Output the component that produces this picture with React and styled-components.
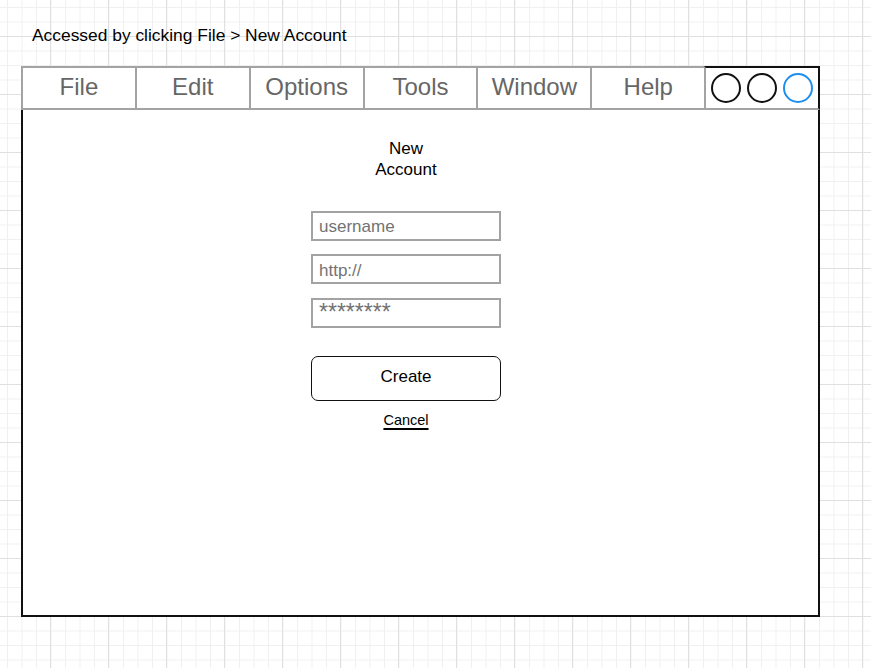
import React from "react";
import styled, { createGlobalStyle } from "styled-components";

const menuItems = ["File", "Edit", "Options", "Tools", "Window", "Help"];

function App() {
	return (
		<>
			<GlobalStyle />
			<Page>
				<Caption>Accessed by clicking File &gt; New Account</Caption>
				<Window>
					<MenuBar>
						{menuItems.map((item) => (
							<MenuItem key={item}>{item}</MenuItem>
						))}
						<Controls>
							<Dot />
							<Dot />
							<Dot $accent />
						</Controls>
					</MenuBar>
					<Body>
						<Form>
							<Title>
								New
								<br />
								Account
							</Title>
							<Fields>
								<Field placeholder="username" />
								<Field placeholder="http://" />
								<Field placeholder="********" $big />
							</Fields>
							<CreateButton type="button">Create</CreateButton>
							<CancelLink href="#">Cancel</CancelLink>
						</Form>
					</Body>
				</Window>
			</Page>
		</>
	);
}

export default App;

const GlobalStyle = createGlobalStyle`
	html, body {
		margin: 0;
		padding: 0;
	}
	body {
		font-family: "Liberation Sans", Arial, Helvetica, sans-serif;
		background-color: #ffffff;
		background-image:
			linear-gradient(to right, #e0e0e0 1px, transparent 1px),
			linear-gradient(to bottom, #e0e0e0 1px, transparent 1px),
			linear-gradient(to right, #f0f0f0 1px, transparent 1px),
			linear-gradient(to bottom, #f0f0f0 1px, transparent 1px);
		background-size: 58px 58px, 58px 58px, 14.5px 14.5px, 14.5px 14.5px;
		background-position: 50px 36px, 50px 36px, 7px 7px, 7px 7px;
		min-height: 668px;
	}
`;

const Page = styled.div`
	padding: 26px 0 0 21px;
`;

const Caption = styled.div`
	margin-left: 11px;
	font-size: 17.4px;
	line-height: 18px;
	color: #000;
	margin-bottom: 22px;
`;

const Window = styled.div`
	width: 799px;
	display: flex;
	flex-direction: column;
`;

const MenuBar = styled.div`
	display: flex;
	height: 44px;
`;

const MenuItem = styled.div`
	flex: 1;
	box-sizing: border-box;
	display: flex;
	align-items: center;
	justify-content: center;
	padding-bottom: 2px;
	border: 2px solid #a3a3a3;
	background: #fff;
	font-size: 24px;
	color: #666;
	& + & {
		margin-left: -2px;
	}
`;

const Controls = styled.div`
	flex: 1;
	box-sizing: border-box;
	margin-left: -2px;
	display: flex;
	align-items: center;
	justify-content: center;
	gap: 6px;
	background: #fff;
	border: 2px solid #a3a3a3;
	border-top-color: #111;
	border-right-color: #111;
`;

const Dot = styled.span`
	width: 30px;
	height: 30px;
	box-sizing: border-box;
	border-radius: 50%;
	border: 2px solid ${(p) => (p.$accent ? "#1e8fef" : "#111")};
`;

const Body = styled.div`
	height: 507px;
	box-sizing: border-box;
	border: 2px solid #111;
	border-top: none;
	background: #fff;
	padding-top: 27.5px;
`;

const Form = styled.div`
	width: 190px;
	margin-left: 288px;
	display: flex;
	flex-direction: column;
	align-items: center;
`;

const Title = styled.div`
	font-size: 17px;
	line-height: 21px;
	text-align: center;
	color: #000;
`;

const Fields = styled.div`
	align-self: stretch;
	display: flex;
	flex-direction: column;
	gap: 13.5px;
	margin-top: 31px;
`;

const Field = styled.input`
	box-sizing: border-box;
	width: 100%;
	height: 30px;
	margin: 0;
	padding: ${(p) => (p.$big ? "0 6px" : "3px 6px 0")};
	border: 2px solid #a3a3a3;
	border-radius: 0;
	outline: none;
	background: #fff;
	font-family: inherit;
	font-size: ${(p) => (p.$big ? "23px" : "17px")};
	color: #666;
	&::placeholder {
		color: #737373;
		opacity: 1;
	}
`;

const CreateButton = styled.button`
	align-self: stretch;
	box-sizing: border-box;
	height: 45px;
	margin-top: 28px;
	padding: 0 0 2px;
	border: 1.5px solid #111;
	border-radius: 7px;
	background: #fff;
	font-family: inherit;
	font-size: 17px;
	color: #000;
	cursor: pointer;
`;

const CancelLink = styled.a`
	margin-top: 11.5px;
	font-size: 14.5px;
	line-height: 16px;
	color: #000;
	text-decoration: underline;
	text-decoration-thickness: 2px;
	text-underline-offset: 3px;
`;
